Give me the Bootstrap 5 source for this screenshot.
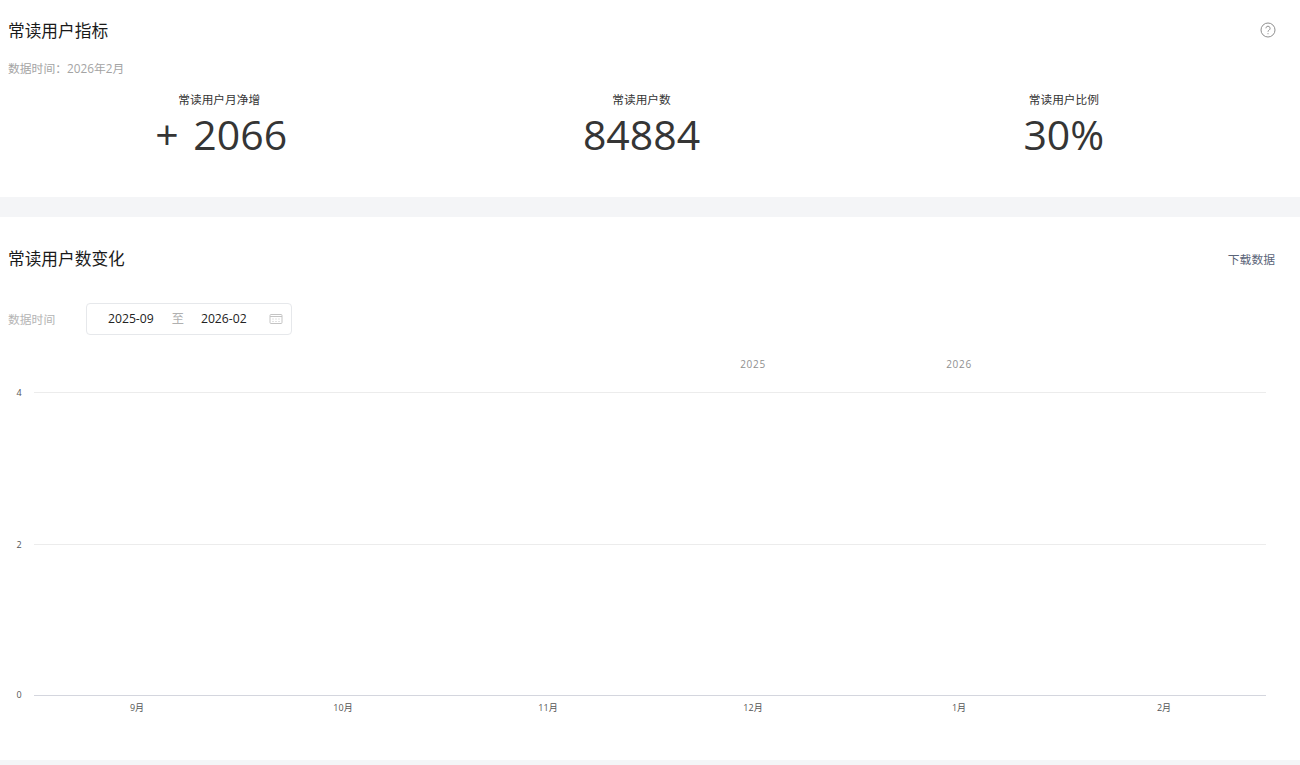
<!DOCTYPE html>
<html lang="zh-CN">
<head>
  <meta charset="UTF-8">
  <title>常读用户指标</title>
  <link rel="stylesheet" href="https://cdn.jsdelivr.net/npm/bootstrap@5.3.2/dist/css/bootstrap.min.css">
  <style>
    html, body { height: 765px; overflow: hidden; }
    body { background: #f4f5f7; font-family: "Open Sans", "Noto Sans CJK SC", sans-serif; color: #353535; }
    .panel-top { height: 197px; padding: 0 25px 0 8px; margin-bottom: 20px; }
    .panel-trend { height: 543px; padding: 0 25px 0 8px; }
    .panel-top .panel-head { height: 60px; padding-top: 19px; }
    .panel-trend .panel-head { height: 84px; }
    .panel-title { font-size: 16.7px; line-height: 24px; font-weight: 400; color: #1a1a1a; margin: 0; }
    .help-icon { margin: 2px -2px 0 0; }
    .data-time { font-size: 11.8px; line-height: 16px; color: #a4a4a4; }
    .stat-row { margin-top: 15px; }
    .stat-label { font-size: 11.7px; line-height: 16px; color: #353535; }
    .stat-value { font-size: 41px; line-height: 54px; color: #353535; }
    .stat-value-net { padding-left: 4px; }
    .stat-plus { margin-right: 4px; }
    .download-link { font-size: 11.8px; color: #5a6478; text-decoration: none; padding-top: 1px; }
    .date-row { margin-top: 2px; }
    .date-label { width: 78px; font-size: 11.8px; color: #b4b4b4; padding-top: 1px; }
    .date-box { width: 206px; height: 32px; border: 1px solid #e6e8eb; border-radius: 4px; font-size: 12.2px; color: #222; padding-left: 21px; }
    .date-sep { color: #b0b0b0; margin: 0 17px 0 18px; }
    .date-icon { margin-left: 22px; }
    .chart-svg { display: block; margin: 20px 0 0 -8px; }
    .chart-svg text { font-family: "Open Sans", "Noto Sans CJK SC", sans-serif; font-size: 9px; fill: #555; }
    .chart-svg .year-tick { font-size: 10px; letter-spacing: .7px; fill: #8f8f8f; }
  </style>
</head>
<body>

<!-- Metrics -->
<section class="panel-top bg-white">
  <div class="panel-head d-flex justify-content-between align-items-start">
    <h2 class="panel-title">常读用户指标</h2>
    <svg class="help-icon" width="18" height="18" viewBox="0 0 18 18" fill="none" stroke="#8f8f8f" stroke-width="1">
      <circle cx="9" cy="9" r="7"/>
      <path d="M6.9 7.3a2.1 2.1 0 1 1 3.2 1.8c-.7.4-1.1.8-1.1 1.6"/>
      <path d="M9 12.2v1"/>
    </svg>
  </div>
  <div class="data-time">数据时间：2026年2月</div>
  <div class="stat-row row g-0 text-center">
    <div class="col-4">
      <div class="stat-label">常读用户月净增</div>
      <div class="stat-value stat-value-net"><span class="stat-plus">+</span> 2066</div>
    </div>
    <div class="col-4">
      <div class="stat-label">常读用户数</div>
      <div class="stat-value">84884</div>
    </div>
    <div class="col-4">
      <div class="stat-label">常读用户比例</div>
      <div class="stat-value">30%</div>
    </div>
  </div>
</section>

<!-- Trend -->
<section class="panel-trend bg-white">
  <div class="panel-head d-flex justify-content-between align-items-center">
    <h2 class="panel-title">常读用户数变化</h2>
    <a class="download-link" href="#">下载数据</a>
  </div>
  <div class="date-row d-flex align-items-center">
    <div class="date-label">数据时间</div>
    <div class="date-box d-flex align-items-center">
      <span>2025-09</span>
      <span class="date-sep">至</span>
      <span>2026-02</span>
      <svg class="date-icon" width="14" height="12" viewBox="0 0 14 12" fill="none" stroke="#c4c4c4">
        <rect x="1" y="1.5" width="12" height="9" rx="1"/>
        <path d="M1 3.5h12"/>
        <path d="M3.5 6h1M6.5 6h1M9.5 6h1M3.5 8.5h1M6.5 8.5h1M9.5 8.5h1"/>
      </svg>
    </div>
  </div>

  <svg class="chart-svg" width="1300" height="385" viewBox="0 0 1300 385">
    <text class="year-tick" x="753" y="13" text-anchor="middle">2025</text>
    <text class="year-tick" x="959" y="13" text-anchor="middle">2026</text>
    <g stroke="#ececec">
      <path d="M34 37.5H1266"/>
      <path d="M34 189.5H1266"/>
    </g>
    <path d="M34 340.5H1266" stroke="#d4d6de"/>
    <text x="19" y="41" text-anchor="middle">4</text>
    <text x="19" y="193" text-anchor="middle">2</text>
    <text x="19" y="343" text-anchor="middle">0</text>
    <text x="137" y="356" text-anchor="middle">9月</text>
    <text x="343" y="356" text-anchor="middle">10月</text>
    <text x="548" y="356" text-anchor="middle">11月</text>
    <text x="753" y="356" text-anchor="middle">12月</text>
    <text x="959" y="356" text-anchor="middle">1月</text>
    <text x="1164" y="356" text-anchor="middle">2月</text>
  </svg>
</section>

<script src="https://cdn.jsdelivr.net/npm/bootstrap@5.3.2/dist/js/bootstrap.bundle.min.js"></script>
</body>
</html>
